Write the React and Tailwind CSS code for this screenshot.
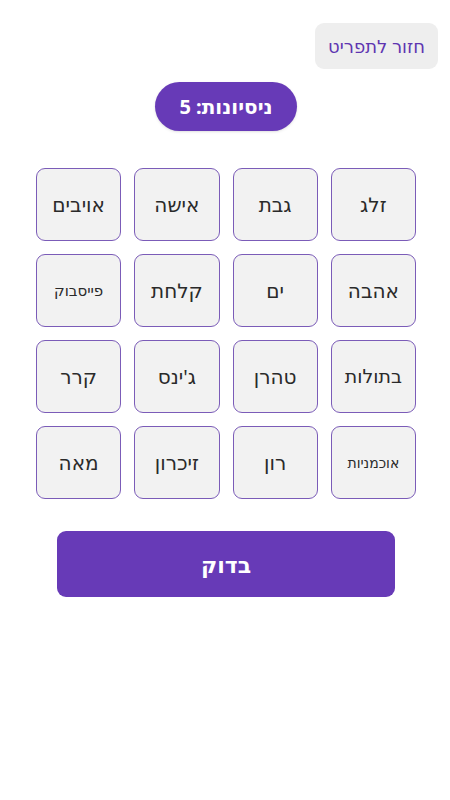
import React from "react";

const words = [
  ["זלג", "text-[20px]"],
  ["גבת", "text-[20px]"],
  ["אישה", "text-[20px]"],
  ["אויבים", "text-[20px]"],
  ["אהבה", "text-[20px]"],
  ["ים", "text-[20px]"],
  ["קלחת", "text-[20px]"],
  ["פייסבוק", "text-[15px]"],
  ["בתולות", "text-[19px]"],
  ["טהרן", "text-[20px]"],
  ["ג'ינס", "text-[20px]"],
  ["קרר", "text-[20px]"],
  ["אוכמניות", "text-[14px]"],
  ["רון", "text-[20px]"],
  ["זיכרון", "text-[20px]"],
  ["מאה", "text-[20px]"],
];

export default function App() {
  return (
    <div
      dir="rtl"
      className="w-[450px] h-[800px] bg-white flex flex-col items-center pl-[2px]"
      style={{ fontFamily: '"Noto Sans", "DejaVu Sans", sans-serif' }}
    >
      <div className="w-full flex justify-start pr-[12px] pt-[23px]">
        <button className="h-[46px] w-[123px] rounded-[9px] bg-[#eeeeee] text-[#5e35b1] text-[18px] flex items-center justify-center">
          חזור לתפריט
        </button>
      </div>
      <div className="mt-[13px] h-[49px] w-[142px] rounded-full bg-[#673ab7] text-white font-bold text-[20px] flex items-center justify-center shadow-sm">
        ניסיונות: 5
      </div>
      <div className="mt-[37px] grid grid-cols-4 gap-x-[13px] gap-y-[13px] w-[380px]">
        {words.map(([w, s], i) => (
          <div
            key={i}
            className={`h-[73px] rounded-[9px] border border-[#7b5cb8] bg-[#f2f2f2] text-[#2a2a2a] flex items-center justify-center ${s}`}
          >
            {w}
          </div>
        ))}
      </div>
      <button className="mt-[32px] w-[338px] h-[66px] rounded-[9px] bg-[#673ab7] text-white font-bold text-[22px] flex items-center justify-center">
        בדוק
      </button>
    </div>
  );
}
